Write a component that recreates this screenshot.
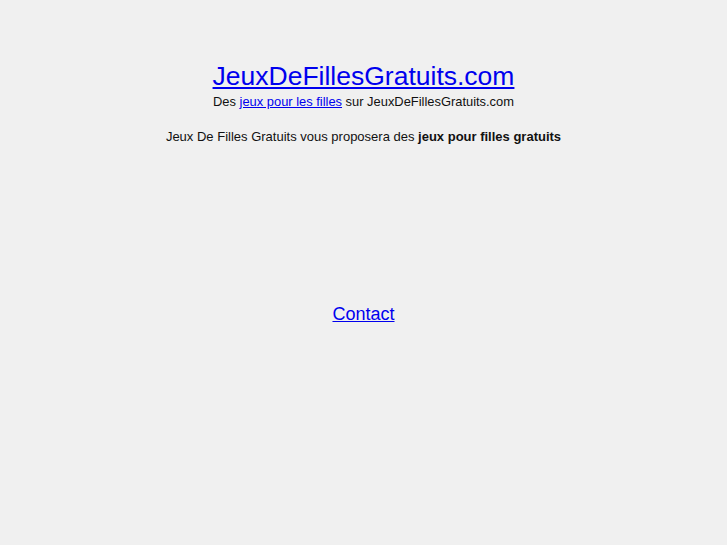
export default function App() {
  return (
    <div className="min-h-[545px] bg-[#f0f0f0] text-center text-black" style={{ fontFamily: '"Liberation Sans", Arial, sans-serif' }}>
      <div className="pt-[60px]">
        <h1 className="text-[26.5px] leading-[32px] font-normal">
          <a href="#" className="text-[#0000ee] underline">JeuxDeFillesGratuits.com</a>
        </h1>
        <p className="text-[12.9px] leading-[16px] mt-[2px] text-[#111]">
          Des <a href="#" className="text-[#0000ee] underline">jeux pour les filles</a> sur JeuxDeFillesGratuits.com
        </p>
        <p className="text-[13px] leading-[16px] mt-[19px] text-[#111]">
          Jeux De Filles Gratuits vous proposera des <b>jeux pour filles gratuits</b>
        </p>
        <div className="mt-[158px] text-[18px] leading-[22px]">
          <a href="#" className="text-[#0000ee] underline">Contact</a>
        </div>
      </div>
    </div>
  );
}
